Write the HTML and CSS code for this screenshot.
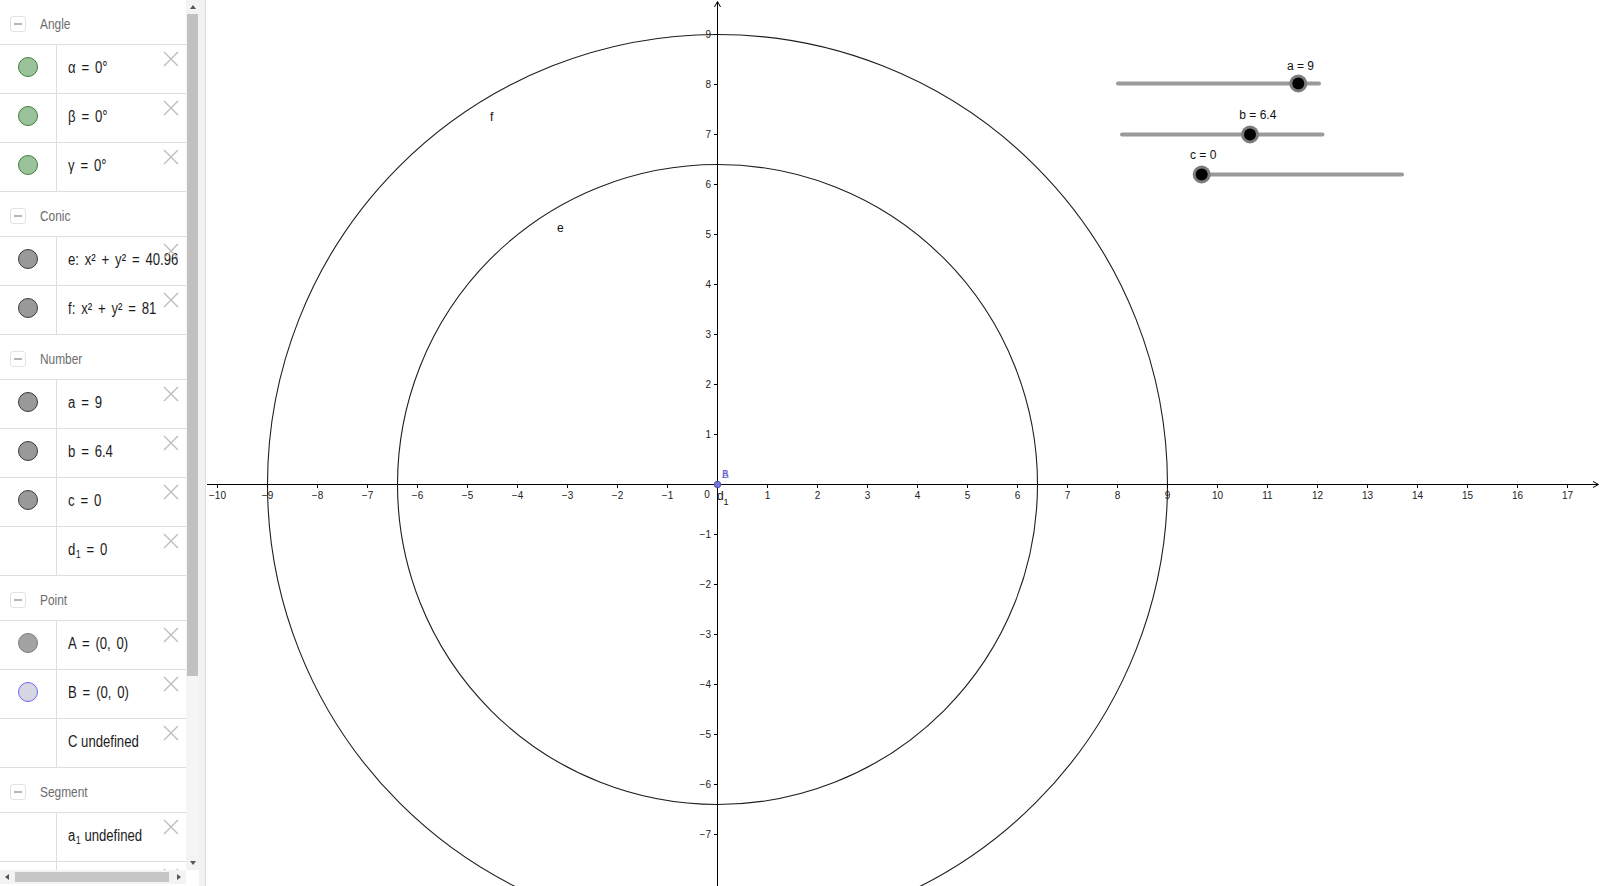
FILE: index.html
```html
<!DOCTYPE html>
<html lang="en">
<head>
<meta charset="utf-8">
<title>Graphing</title>
<link rel="stylesheet" href="styles.css">
</head>
<body>
<div class="app">
  <aside class="sidebar">
    <div class="panel">
      <div class="panel-main">
        <div class="list">
          <div class="group-head"><span class="collapse"></span><span class="group-title">Angle</span></div>
          <div class="item"><div class="marble-cell"><span class="marble m-angle"></span></div><div class="formula"><span class="ftext eq">α = 0°</span></div><svg class="close" viewBox="0 0 16 16"><path d="M1 1L15 15M15 1L1 15"/></svg></div>
          <div class="item"><div class="marble-cell"><span class="marble m-angle"></span></div><div class="formula"><span class="ftext eq">β = 0°</span></div><svg class="close" viewBox="0 0 16 16"><path d="M1 1L15 15M15 1L1 15"/></svg></div>
          <div class="item"><div class="marble-cell"><span class="marble m-angle"></span></div><div class="formula"><span class="ftext eq">γ = 0°</span></div><svg class="close" viewBox="0 0 16 16"><path d="M1 1L15 15M15 1L1 15"/></svg></div>

          <div class="group-head"><span class="collapse"></span><span class="group-title">Conic</span></div>
          <div class="item"><div class="marble-cell"><span class="marble m-gray"></span></div><div class="formula"><span class="ftext eq">e: x² + y² = 40.96</span></div><svg class="close" viewBox="0 0 16 16"><path d="M1 1L15 15M15 1L1 15"/></svg></div>
          <div class="item"><div class="marble-cell"><span class="marble m-gray"></span></div><div class="formula"><span class="ftext eq">f: x² + y² = 81</span></div><svg class="close" viewBox="0 0 16 16"><path d="M1 1L15 15M15 1L1 15"/></svg></div>

          <div class="group-head"><span class="collapse"></span><span class="group-title">Number</span></div>
          <div class="item"><div class="marble-cell"><span class="marble m-gray"></span></div><div class="formula"><span class="ftext eq">a = 9</span></div><svg class="close" viewBox="0 0 16 16"><path d="M1 1L15 15M15 1L1 15"/></svg></div>
          <div class="item"><div class="marble-cell"><span class="marble m-gray"></span></div><div class="formula"><span class="ftext eq">b = 6.4</span></div><svg class="close" viewBox="0 0 16 16"><path d="M1 1L15 15M15 1L1 15"/></svg></div>
          <div class="item"><div class="marble-cell"><span class="marble m-gray"></span></div><div class="formula"><span class="ftext eq">c = 0</span></div><svg class="close" viewBox="0 0 16 16"><path d="M1 1L15 15M15 1L1 15"/></svg></div>
          <div class="item"><div class="marble-cell"></div><div class="formula"><span class="ftext eq">d<sub class="sub">1</sub> = 0</span></div><svg class="close" viewBox="0 0 16 16"><path d="M1 1L15 15M15 1L1 15"/></svg></div>

          <div class="group-head"><span class="collapse"></span><span class="group-title">Point</span></div>
          <div class="item"><div class="marble-cell"><span class="marble m-point-a"></span></div><div class="formula"><span class="ftext eq">A = (0, 0)</span></div><svg class="close" viewBox="0 0 16 16"><path d="M1 1L15 15M15 1L1 15"/></svg></div>
          <div class="item"><div class="marble-cell"><span class="marble m-point-b"></span></div><div class="formula"><span class="ftext eq">B = (0, 0)</span></div><svg class="close" viewBox="0 0 16 16"><path d="M1 1L15 15M15 1L1 15"/></svg></div>
          <div class="item"><div class="marble-cell"></div><div class="formula"><span class="ftext">C undefined</span></div><svg class="close" viewBox="0 0 16 16"><path d="M1 1L15 15M15 1L1 15"/></svg></div>

          <div class="group-head"><span class="collapse"></span><span class="group-title">Segment</span></div>
          <div class="item"><div class="marble-cell"></div><div class="formula"><span class="ftext">a<sub class="sub">1</sub> undefined</span></div><svg class="close" viewBox="0 0 16 16"><path d="M1 1L15 15M15 1L1 15"/></svg></div>
          <div class="item"><div class="marble-cell"></div><div class="formula"></div><svg class="close" viewBox="0 0 16 16"><path d="M1 1L15 15M15 1L1 15"/></svg></div>
        </div>
        <div class="vscroll">
          <div class="varrow"><span class="tri-up"></span></div>
          <div class="vtrack"><div class="vthumb"></div></div>
          <div class="varrow"><span class="tri-down"></span></div>
        </div>
      </div>
      <div class="hscroll">
        <div class="harrow"><span class="tri-left"></span></div>
        <div class="htrack"><div class="hthumb"></div></div>
        <div class="harrow"><span class="tri-right"></span></div>
        <div class="corner"></div>
      </div>
    </div>
    <div class="splitter"></div>
  </aside>

  <main class="canvas">
    <svg class="graph" width="1394" height="886" viewBox="0 0 1394 886">
      <g transform="translate(-206 0)">
        <!-- conics -->
        <circle class="conic" cx="717.5" cy="484.5" r="450"/>
        <circle class="conic" cx="717.5" cy="484.5" r="320"/>
        <text class="curve-label" x="490" y="121">f</text>
        <text class="curve-label" x="557" y="232">e</text>

        <!-- axes -->
        <path class="axis" d="M207 484.5H1598M1593 481.5L1598.5 484.5L1593 487.5M717.5 2V886M714.5 7L717.5 1.5L720.5 7"/>
        <path class="axis" d="M217.5 484V488M267.5 484V488M317.5 484V488M367.5 484V488M417.5 484V488M467.5 484V488M517.5 484V488M567.5 484V488M617.5 484V488M667.5 484V488M767.5 484V488M817.5 484V488M867.5 484V488M917.5 484V488M967.5 484V488M1017.5 484V488M1067.5 484V488M1117.5 484V488M1167.5 484V488M1217.5 484V488M1267.5 484V488M1317.5 484V488M1367.5 484V488M1417.5 484V488M1467.5 484V488M1517.5 484V488M1567.5 484V488"/>
        <path class="axis" d="M714 34.5H718M714 84.5H718M714 134.5H718M714 184.5H718M714 234.5H718M714 284.5H718M714 334.5H718M714 384.5H718M714 434.5H718M714 534.5H718M714 584.5H718M714 634.5H718M714 684.5H718M714 734.5H718M714 784.5H718M714 834.5H718"/>

        <g class="xlab">
          <text x="217.5" y="499">−10</text>
          <text x="267.5" y="499">−9</text>
          <text x="317.5" y="499">−8</text>
          <text x="367.5" y="499">−7</text>
          <text x="417.5" y="499">−6</text>
          <text x="467.5" y="499">−5</text>
          <text x="517.5" y="499">−4</text>
          <text x="567.5" y="499">−3</text>
          <text x="617.5" y="499">−2</text>
          <text x="667.5" y="499">−1</text>
          <text x="707" y="498">0</text>
          <text x="767.5" y="499">1</text>
          <text x="817.5" y="499">2</text>
          <text x="867.5" y="499">3</text>
          <text x="917.5" y="499">4</text>
          <text x="967.5" y="499">5</text>
          <text x="1017.5" y="499">6</text>
          <text x="1067.5" y="499">7</text>
          <text x="1117.5" y="499">8</text>
          <text x="1167.5" y="499">9</text>
          <text x="1217.5" y="499">10</text>
          <text x="1267.5" y="499">11</text>
          <text x="1317.5" y="499">12</text>
          <text x="1367.5" y="499">13</text>
          <text x="1417.5" y="499">14</text>
          <text x="1467.5" y="499">15</text>
          <text x="1517.5" y="499">16</text>
          <text x="1567.5" y="499">17</text>
        </g>
        <g class="ylab">
          <text x="711" y="38">9</text>
          <text x="711" y="88">8</text>
          <text x="711" y="138">7</text>
          <text x="711" y="188">6</text>
          <text x="711" y="238">5</text>
          <text x="711" y="288">4</text>
          <text x="711" y="338">3</text>
          <text x="711" y="388">2</text>
          <text x="711" y="438">1</text>
          <text x="711" y="538">−1</text>
          <text x="711" y="588">−2</text>
          <text x="711" y="638">−3</text>
          <text x="711" y="688">−4</text>
          <text x="711" y="738">−5</text>
          <text x="711" y="788">−6</text>
          <text x="711" y="838">−7</text>
        </g>

        <!-- points -->
        <circle class="pt" cx="717.5" cy="484.5" r="3.3"/>
        <text class="pt-label pt-a" x="722" y="478">A</text>
        <text class="pt-label" x="722" y="478">B</text>
        <text class="num-label" x="717" y="500">d</text>
        <text class="num-sub" x="723.5" y="505">1</text>

        <!-- sliders -->
        <line class="slider-line" x1="1118" y1="83.5" x2="1319" y2="83.5"/>
        <circle class="knob-ring" cx="1298.3" cy="83.5" r="9"/>
        <circle class="knob" cx="1298.3" cy="83.5" r="6"/>
        <text class="slider-label" x="1287" y="69.5">a = 9</text>

        <line class="slider-line" x1="1122" y1="134.5" x2="1322.5" y2="134.5"/>
        <circle class="knob-ring" cx="1250" cy="134.5" r="9"/>
        <circle class="knob" cx="1250" cy="134.5" r="6"/>
        <text class="slider-label" x="1239.3" y="119">b = 6.4</text>

        <line class="slider-line" x1="1203" y1="174.5" x2="1402" y2="174.5"/>
        <circle class="knob-ring" cx="1201.7" cy="174.5" r="9"/>
        <circle class="knob" cx="1201.7" cy="174.5" r="6"/>
        <text class="slider-label" x="1190" y="159">c = 0</text>
      </g>
    </svg>
  </main>
</div>
</body>
</html>
```
FILE: styles.css
```css
* { box-sizing: border-box; }
html, body { margin: 0; padding: 0; background: #ffffff; }
body {
  width: 1600px;
  height: 886px;
  overflow: hidden;
  font-family: "Liberation Sans", Arial, sans-serif;
}
.app { display: flex; width: 1600px; height: 886px; }

/* ---------- sidebar ---------- */
.sidebar { display: flex; width: 206px; flex: none; height: 886px; }
.panel { width: 199px; display: flex; flex-direction: column; }
.panel-main { display: flex; height: 870px; }
.list { width: 186px; height: 870px; overflow: hidden; background: #fff; }

.group-head {
  height: 45px;
  padding-top: 4px;
  border-bottom: 1px solid #dedede;
  display: flex;
  align-items: center;
}
.collapse {
  width: 16px; height: 16px;
  margin-left: 10px;
  border: 1px solid #e2e2e2;
  border-radius: 3px;
  display: flex; align-items: center; justify-content: center;
  flex: none;
}
.collapse::before {
  content: "";
  width: 8px; height: 1.5px;
  background: #b5b5b5;
}
.group-title {
  display: inline-block;
  margin-left: 14px;
  font-size: 14.5px;
  color: #6c6c6c;
  transform: scaleX(0.82);
  transform-origin: left center;
  white-space: nowrap;
}

.item {
  position: relative;
  height: 49px;
  border-bottom: 1px solid #dedede;
  display: flex;
}
.marble-cell {
  width: 57px; flex: none;
  border-right: 1px solid #dedede;
  display: flex; align-items: center; justify-content: center;
  padding-bottom: 4px;
  padding-right: 1px;
}
.marble {
  width: 20px; height: 20px;
  border-radius: 50%;
  border: 1px solid #333;
}
.m-angle { background: #9bc39b; border-color: #3f7f3f; }
.m-gray { background: #999999; border-color: #3a3a3a; }
.m-point-a { background: #a3a3a3; border-color: #7a7a7a; }
.m-point-b { background: #d6d6e2; border-color: #6a6aee; }

.formula {
  flex: 1;
  min-width: 0;
  display: flex; align-items: center;
  padding-left: 11px;
  padding-bottom: 3px;
}
.ftext {
  display: inline-block;
  font-size: 16px;
  line-height: 20px;
  color: #1b1b1b;
  white-space: pre;
  transform: scaleX(0.82);
  transform-origin: left center;
}
.eq { word-spacing: 2.7px; }
.sub { font-size: 11px; vertical-align: -3px; line-height: 0; margin-left: 0.5px; }

.close {
  position: absolute;
  top: 6px; right: 7px;
  width: 16px; height: 16px;
  fill: none;
  stroke: #bdbdbd;
  stroke-width: 1.4;
}

/* vertical scrollbar */
.vscroll {
  width: 13px;
  display: flex; flex-direction: column;
  background: #f3f3f3;
}
.varrow { height: 14px; display: flex; align-items: center; justify-content: center; flex: none; }
.tri-up { width: 0; height: 0; border-left: 3.5px solid transparent; border-right: 3.5px solid transparent; border-bottom: 4px solid #555; }
.tri-down { width: 0; height: 0; border-left: 3.5px solid transparent; border-right: 3.5px solid transparent; border-top: 4px solid #555; }
.vtrack { flex: 1; padding: 0 1px; background: #f5f5f5; }
.vthumb { height: 662px; background: #c1c1c1; }

/* horizontal scrollbar */
.hscroll { height: 14px; display: flex; background: #f3f3f3; }
.harrow { width: 14px; display: flex; align-items: center; justify-content: center; flex: none; }
.tri-left { width: 0; height: 0; border-top: 3.5px solid transparent; border-bottom: 3.5px solid transparent; border-right: 4px solid #555; }
.tri-right { width: 0; height: 0; border-top: 3.5px solid transparent; border-bottom: 3.5px solid transparent; border-left: 4px solid #555; }
.htrack { width: 158px; padding: 2px 1px; }
.hthumb { width: 154px; height: 10px; background: #c6c6c6; }
.corner { flex: 1; background: #fff; }

.splitter {
  width: 7px;
  background: #f2f2f2;
  border-right: 1px solid #dcdcdc;
}

/* ---------- canvas ---------- */
.canvas { flex: 1; height: 886px; overflow: hidden; background: #fff; }
.graph { display: block; font-family: "Liberation Sans", Arial, sans-serif; }
.conic { fill: none; stroke: #1e1e1e; stroke-width: 1.1; }
.axis { fill: none; stroke: #000; stroke-width: 1; }
.xlab text { font-size: 10px; text-anchor: middle; fill: #222; }
.ylab text { font-size: 10px; text-anchor: end; fill: #222; }
.curve-label { font-size: 12px; fill: #111; }
.pt { fill: #7474da; stroke: #4a4aa8; stroke-width: 0.8; }
.pt-label { font-size: 10px; fill: #5c5ccc; }
.pt-a { opacity: 0.6; }
.num-label { font-size: 12px; fill: #111; }
.num-sub { font-size: 9px; fill: #111; }
.slider-line { stroke: #9a9a9a; stroke-width: 4; stroke-linecap: round; }
.knob-ring { fill: #7c7c7c; }
.knob { fill: #000; }
.slider-label { font-size: 12px; fill: #111; }
```
